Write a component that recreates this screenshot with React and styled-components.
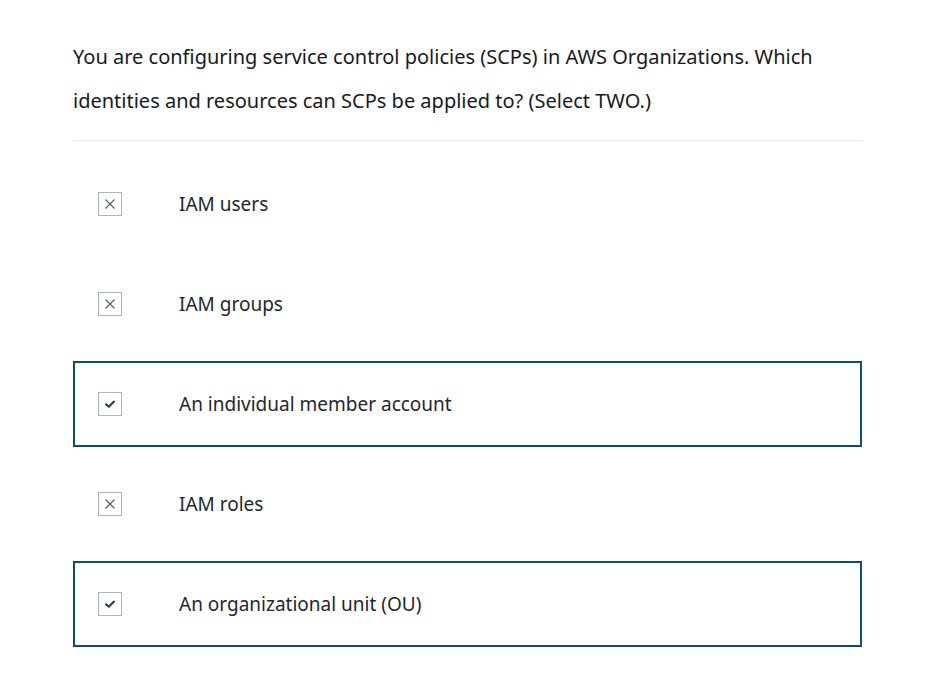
import styled, { createGlobalStyle } from 'styled-components';

const GlobalStyle = createGlobalStyle`
  html, body {
    margin: 0;
    padding: 0;
    background: #ffffff;
  }
  body {
    font-family: "Noto Sans", "Open Sans", sans-serif;
    color: #16191f;
  }
`;

const Page = styled.main`
  width: 789px;
  padding: 35px 0 0 73px;
`;

const Question = styled.p`
  margin: 0;
  font-size: 20px;
  line-height: 44px;
  color: #16191f;
  padding-bottom: 17px;
  border-bottom: 1px solid #eaeded;
`;

const OptionList = styled.ul`
  list-style: none;
  margin: 20px 0 0;
  padding: 0;
  display: flex;
  flex-direction: column;
  gap: 14px;
`;

const Option = styled.li`
  height: 86px;
  box-sizing: border-box;
  display: flex;
  align-items: center;
  padding-left: 23px;
  border: 2px solid ${({ $selected }) => ($selected ? '#0d4f6e' : 'transparent')};
`;

const Box = styled.span`
  width: 24px;
  height: 24px;
  box-sizing: border-box;
  border: 1px solid #aab7b8;
  background: #fff;
  display: flex;
  align-items: center;
  justify-content: center;
  flex-shrink: 0;

  & svg {
    display: block;
  }
`;

const Label = styled.span`
  margin-left: 57px;
  font-size: 19px;
  color: #1e2733;
`;

const CrossIcon = () => (
  <svg width="12" height="12" viewBox="0 0 12 12">
    <path d="M1.5 1.5 L10.5 10.5 M10.5 1.5 L1.5 10.5" stroke="#545b64" strokeWidth="1.1" fill="none" />
  </svg>
);

const CheckIcon = () => (
  <svg width="12" height="12" viewBox="0 0 12 12">
    <path d="M2 6.3 L4.8 8.8 L10 3.5" stroke="#1d3a55" strokeWidth="2" fill="none" strokeLinecap="round" strokeLinejoin="round" />
  </svg>
);

const options = [
  { label: 'IAM users', correct: false },
  { label: 'IAM groups', correct: false },
  { label: 'An individual member account', correct: true },
  { label: 'IAM roles', correct: false },
  { label: 'An organizational unit (OU)', correct: true },
];

const App = () => (
  <>
    <GlobalStyle />
    <Page>
      <Question>
        You are configuring service control policies (SCPs) in AWS Organizations. Which
        identities and resources can SCPs be applied to? (Select TWO.)
      </Question>
      <OptionList>
        {options.map((o) => (
          <Option key={o.label} $selected={o.correct}>
            <Box>{o.correct ? <CheckIcon /> : <CrossIcon />}</Box>
            <Label>{o.label}</Label>
          </Option>
        ))}
      </OptionList>
    </Page>
  </>
);

export default App;
